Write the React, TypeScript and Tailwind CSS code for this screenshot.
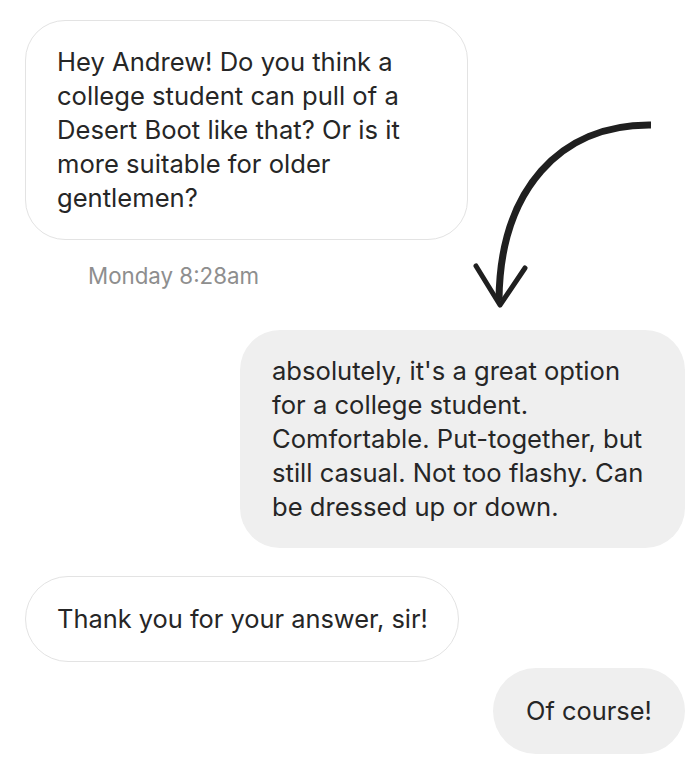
export default function App() {
  return (
    <div className="relative flex min-h-[776px] w-full flex-col bg-white pt-[20px] font-['Inter',sans-serif] text-[25.6px] leading-[34px] text-[#262626]">
      {/* incoming */}
      <div className="ml-[25px] w-[443px] rounded-[40px] border border-[#e3e3e3] px-[31px] py-[24px]">
        Hey Andrew! Do you think a<br />
        college student can pull of a<br />
        Desert Boot like that? Or is it<br />
        more suitable for older<br />
        gentlemen?
      </div>

      <div className="ml-[88px] mt-[21px] text-[22.3px] leading-[30px] text-[#8e8e8e]">Monday 8:28am</div>

      {/* outgoing */}
      <div className="ml-[240px] mt-[39px] w-[445px] rounded-[40px] bg-[#efefef] px-[32px] py-[24px]">
        absolutely, it's a great option<br />
        for a college student.<br />
        Comfortable. Put-together, but<br />
        still casual. Not too flashy. Can<br />
        be dressed up or down.
      </div>

      <div className="ml-[25px] mt-[28px] w-[434px] whitespace-nowrap rounded-full border border-[#e3e3e3] pl-[31px] py-[24px] text-[25.4px] leading-[36px]">
        Thank you for your answer, sir!
      </div>

      <div className="ml-auto mr-[15px] mt-[6px] w-[192px] whitespace-nowrap rounded-full bg-[#efefef] py-[25px] text-center text-[25.4px] leading-[36px]">
        Of course!
      </div>

      {/* hand-drawn arrow annotation */}
      <svg className="absolute left-0 top-0" width="700" height="776" viewBox="0 0 700 776" fill="none">
        <path d="M651 125 C 560 124, 500 190, 499 300" stroke="#1f1f1f" strokeWidth="7" strokeLinecap="butt" />
        <path d="M476 266 L 500 305 L 525 268" stroke="#1f1f1f" strokeWidth="5" strokeLinecap="round" strokeLinejoin="round" />
      </svg>
    </div>
  );
}
